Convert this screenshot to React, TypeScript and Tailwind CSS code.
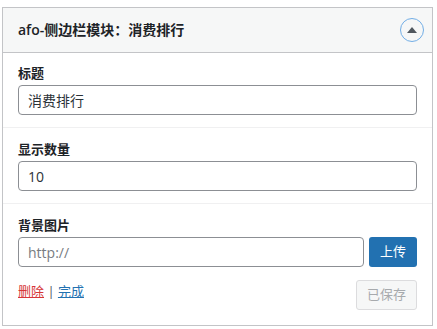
import { useState } from "react";

const FONT = "font-['Open_Sans','Noto_Sans_CJK_SC',sans-serif]";

export default function App() {
  const [title, setTitle] = useState("消费排行");
  const [count, setCount] = useState("10");
  const [bg, setBg] = useState("");

  return (
    <div className={`${FONT} h-[329px] w-[437px] bg-white pl-[2px] pt-[7px]`}>
      <div className="w-[431px] border border-[#c3c4c7] bg-white">
        {/* Header */}
        <div className="flex h-[45px] items-center justify-between border-b border-[#c3c4c7] bg-[#f6f7f7] pl-[15px] pr-[8px]">
          <h3 className="text-[14px] font-semibold leading-[20px] text-[#1d2327]">
            afo-侧边栏模块：消费排行
          </h3>
          <button
            type="button"
            className="flex h-[24px] w-[24px] items-center justify-center rounded-full border-[1.5px] border-[#72aee6] bg-transparent"
          >
            <span className="block h-0 w-0 border-x-[5px] border-b-[6px] border-x-transparent border-b-[#50575e]" />
          </button>
        </div>

        {/* Title */}
        <div className="border-b border-[#f0f0f1] px-[15px] pb-[12px] pt-[9px]">
          <label className="mb-[1px] block h-[22px] text-[13px] font-semibold leading-[22px] text-[#1d2327]">
            标题
          </label>
          <input
            type="text"
            value={title}
            onChange={(e) => setTitle(e.target.value)}
            className="block h-[30px] w-full rounded-[4px] border border-[#8c8f94] px-[9px] text-[14px] text-[#2c3338] outline-none"
          />
        </div>

        {/* Count */}
        <div className="border-b border-[#f0f0f1] px-[15px] pb-[12px] pt-[10px]">
          <label className="mb-[1px] block h-[22px] text-[13px] font-semibold leading-[22px] text-[#1d2327]">
            显示数量
          </label>
          <input
            type="text"
            value={count}
            onChange={(e) => setCount(e.target.value)}
            className="block h-[30px] w-full rounded-[4px] border border-[#8c8f94] px-[9px] text-[14px] text-[#2c3338] outline-none"
          />
        </div>

        {/* Background image */}
        <div className="px-[15px] pb-[15px] pt-[10px]">
          <label className="mb-[1px] block h-[22px] text-[13px] font-semibold leading-[22px] text-[#1d2327]">
            背景图片
          </label>
          <div className="flex gap-[5px]">
            <input
              type="text"
              value={bg}
              placeholder="http://"
              onChange={(e) => setBg(e.target.value)}
              className="block h-[30px] w-[347px] rounded-[4px] border border-[#8c8f94] px-[9px] text-[14px] text-[#2c3338] outline-none placeholder:text-[#787c82]"
            />
            <button
              type="button"
              className="h-[30px] w-[48px] rounded-[3px] bg-[#2271b1] text-[13px] text-white"
            >
              上传
            </button>
          </div>
          <div className="mt-[13px] flex items-start justify-between">
            <div className="pt-[1px] text-[13px] leading-[20px]">
              <a href="#" className="text-[#d63638] underline">
                删除
              </a>
              <span className="text-[#50575e]"> | </span>
              <a href="#" className="text-[#2271b1] underline">
                完成
              </a>
            </div>
            <button
              type="button"
              disabled
              className="h-[30px] w-[61px] rounded-[3px] border border-[#dcdcde] bg-[#f6f7f7] text-[13px] text-[#a7aaad]"
            >
              已保存
            </button>
          </div>
        </div>
      </div>
    </div>
  );
}
